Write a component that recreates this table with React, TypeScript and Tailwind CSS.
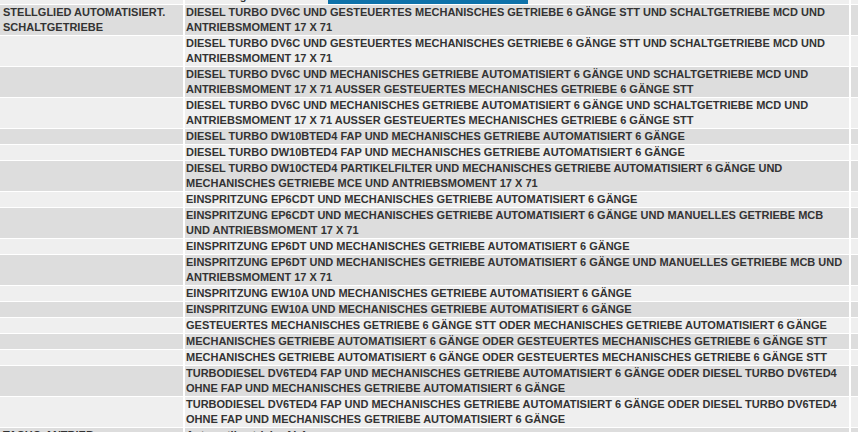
import React from 'react';

type Row = { label?: string[]; lines: string[] };

const rows: Row[] = [
  { lines: ['Automatikgetriebe AL4'] },
  {
    label: ['STELLGLIED AUTOMATISIERT.', 'SCHALTGETRIEBE'],
    lines: ['DIESEL TURBO DV6C UND GESTEUERTES MECHANISCHES GETRIEBE 6 GÄNGE STT UND SCHALTGETRIEBE MCD UND', 'ANTRIEBSMOMENT 17 X 71'],
  },
  { lines: ['DIESEL TURBO DV6C UND GESTEUERTES MECHANISCHES GETRIEBE 6 GÄNGE STT UND SCHALTGETRIEBE MCD UND', 'ANTRIEBSMOMENT 17 X 71'] },
  { lines: ['DIESEL TURBO DV6C UND MECHANISCHES GETRIEBE AUTOMATISIERT 6 GÄNGE UND SCHALTGETRIEBE MCD UND', 'ANTRIEBSMOMENT 17 X 71 AUSSER GESTEUERTES MECHANISCHES GETRIEBE 6 GÄNGE STT'] },
  { lines: ['DIESEL TURBO DV6C UND MECHANISCHES GETRIEBE AUTOMATISIERT 6 GÄNGE UND SCHALTGETRIEBE MCD UND', 'ANTRIEBSMOMENT 17 X 71 AUSSER GESTEUERTES MECHANISCHES GETRIEBE 6 GÄNGE STT'] },
  { lines: ['DIESEL TURBO DW10BTED4 FAP UND MECHANISCHES GETRIEBE AUTOMATISIERT 6 GÄNGE'] },
  { lines: ['DIESEL TURBO DW10BTED4 FAP UND MECHANISCHES GETRIEBE AUTOMATISIERT 6 GÄNGE'] },
  { lines: ['DIESEL TURBO DW10CTED4 PARTIKELFILTER UND MECHANISCHES GETRIEBE AUTOMATISIERT 6 GÄNGE UND', 'MECHANISCHES GETRIEBE MCE UND ANTRIEBSMOMENT 17 X 71'] },
  { lines: ['EINSPRITZUNG EP6CDT UND MECHANISCHES GETRIEBE AUTOMATISIERT 6 GÄNGE'] },
  { lines: ['EINSPRITZUNG EP6CDT UND MECHANISCHES GETRIEBE AUTOMATISIERT 6 GÄNGE UND MANUELLES GETRIEBE MCB', 'UND ANTRIEBSMOMENT 17 X 71'] },
  { lines: ['EINSPRITZUNG EP6DT UND MECHANISCHES GETRIEBE AUTOMATISIERT 6 GÄNGE'] },
  { lines: ['EINSPRITZUNG EP6DT UND MECHANISCHES GETRIEBE AUTOMATISIERT 6 GÄNGE UND MANUELLES GETRIEBE MCB UND', 'ANTRIEBSMOMENT 17 X 71'] },
  { lines: ['EINSPRITZUNG EW10A UND MECHANISCHES GETRIEBE AUTOMATISIERT 6 GÄNGE'] },
  { lines: ['EINSPRITZUNG EW10A UND MECHANISCHES GETRIEBE AUTOMATISIERT 6 GÄNGE'] },
  { lines: ['GESTEUERTES MECHANISCHES GETRIEBE 6 GÄNGE STT ODER MECHANISCHES GETRIEBE AUTOMATISIERT 6 GÄNGE'] },
  { lines: ['MECHANISCHES GETRIEBE AUTOMATISIERT 6 GÄNGE ODER GESTEUERTES MECHANISCHES GETRIEBE 6 GÄNGE STT'] },
  { lines: ['MECHANISCHES GETRIEBE AUTOMATISIERT 6 GÄNGE ODER GESTEUERTES MECHANISCHES GETRIEBE 6 GÄNGE STT'] },
  { lines: ['TURBODIESEL DV6TED4 FAP UND MECHANISCHES GETRIEBE AUTOMATISIERT 6 GÄNGE ODER DIESEL TURBO DV6TED4', 'OHNE FAP UND MECHANISCHES GETRIEBE AUTOMATISIERT 6 GÄNGE'] },
  { lines: ['TURBODIESEL DV6TED4 FAP UND MECHANISCHES GETRIEBE AUTOMATISIERT 6 GÄNGE ODER DIESEL TURBO DV6TED4', 'OHNE FAP UND MECHANISCHES GETRIEBE AUTOMATISIERT 6 GÄNGE'] },
  { label: ['TACHO-ANTRIEB'], lines: ['Automatikgetriebe AL4'] },
];

export default function App() {
  return (
    <div className="relative h-[432px] w-[858px] overflow-hidden bg-white font-['Liberation_Sans',Arial,sans-serif] text-[11px] font-bold leading-[15px] text-[#333333]">
      <div className="-mt-[11px] flex flex-col gap-px">
        {rows.map((row, i) => {
          const bg = i % 2 === 0 ? 'bg-[#efefef]' : 'bg-[#dddddd]';
          return (
            <div key={i} className="flex gap-[2px]">
              <div className={`w-[183px] shrink-0 pl-[3px] ${bg}`}>
                {row.label?.map((l, j) => (
                  <div key={j} className="whitespace-nowrap">{l}</div>
                ))}
              </div>
              <div className={`w-[664px] shrink-0 pl-px ${bg}`}>
                {row.lines.map((l, j) => (
                  <div key={j} className="whitespace-nowrap">{l}</div>
                ))}
              </div>
              <div className={`flex-1 ${bg}`} />
            </div>
          );
        })}
      </div>
      <div className="absolute left-[328px] top-0 h-[4px] w-[200px] bg-[#0e72aa]" />
    </div>
  );
}
